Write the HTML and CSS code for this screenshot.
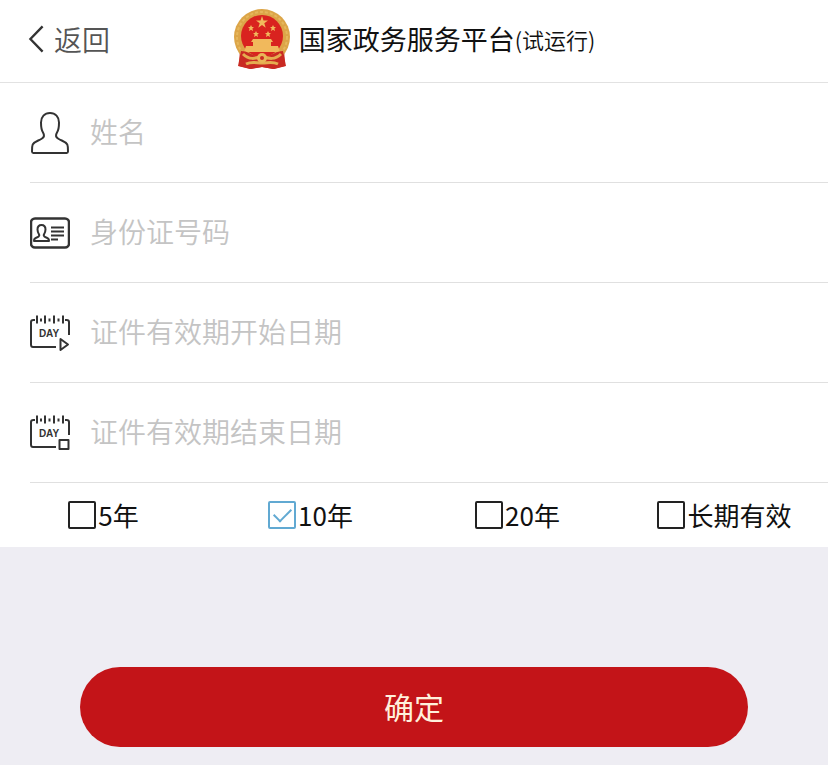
FILE: index.html
```
<!DOCTYPE html>
<html lang="zh-CN">
<head>
<meta charset="utf-8">
<meta name="viewport" content="width=device-width, initial-scale=1">
<title>国家政务服务平台</title>
<link rel="stylesheet" href="styles.css">
</head>
<body>
<header class="header">
  <a class="back" href="#">
    <svg class="back-icon" viewBox="0 0 18 32" aria-hidden="true"><path d="M15.500 2.500 2.500 16l13 13.500"/></svg>
    <span>返回</span>
  </a>
  <h1 class="brand">
    <svg class="emblem" viewBox="0 0 58 62" aria-hidden="true">
      <path fill="#c92a22" d="M7 40h44l1 18-12 3-11-2-11 2-12-3z"/>
      <circle cx="29" cy="29" r="28" fill="#dca548"/>
      <circle cx="29" cy="29" r="25" fill="none" stroke="#e6b75c" stroke-width="2" stroke-dasharray="3 2"/>
      <circle cx="29" cy="28" r="21" fill="#d9231f"/>
      <g fill="#f1b95c">
        <path d="m29 8 1.500 4.500H35l-3.700 2.800 1.400 4.400L29 17l-3.700 2.700 1.400-4.400L23 12.500h4.500z"/>
        <path d="m18 17 1 2h2l-1.600 1.500.6 2.500-2-1.300-2 1.300.6-2.500L15 19h2zM40 17l1 2h2l-1.600 1.500.6 2.500-2-1.300-2 1.300.6-2.500L37 19h2zM23 23l1 2h2l-1.600 1.500.6 2.500-2-1.300-2 1.300.6-2.500L20 25h2zM35 23l1 2h2l-1.600 1.500.6 2.500-2-1.300-2 1.300.6-2.500L32 25h2z"/>
        <path d="M20 31h18l2 3h-2v4h7l2 6H11l2-6h7v-4h-2z"/>
      </g>
      <path fill="#c92a22" d="M8 43c7 0 10 4 16 5l5-3 5 3c6-1 9-5 16-5l3 15-12 3-12-2-12 2-12-3z"/>
      <path fill="none" stroke="#e5ad50" stroke-width="3" d="M10 46c6 6 12 5 19 2 7 3 13 4 19-2M13 56c6-3 10-1 16-1s10-2 16 1"/>
      <circle cx="29" cy="50" r="5" fill="#e9b557"/>
      <circle cx="29" cy="50" r="2" fill="#c92a22"/>
    </svg>
    <span class="brand-name">国家政务服务平台</span><small class="brand-note">(试运行)</small>
  </h1>
</header>
<form class="form">
  <div class="fields">
    <div class="field">
      <svg class="field-icon" viewBox="0 0 40 44" aria-hidden="true"><path d="M20 2c-5.500 0-9 4-9 9.500 0 4.500.3 7.500 2 10 1.700 2.700 1.300 4.500-1 6-3.500 2.300-7.500 3-9.300 6C1.900 35.500 1.900 38 2 40.500q.1 1.500 1.300 1.500h33.400q1.200 0 1.300-1.500c.1-2.500.1-5-.7-7-1.800-3-5.800-3.700-9.300-6-2.300-1.500-2.700-3.300-1-6 1.700-2.500 2-5.500 2-10C29 6 25.500 2 20 2z"/></svg>
      <input class="field-input" type="text" aria-label="姓名" placeholder="姓名">
    </div>
    <div class="field">
      <svg class="field-icon" viewBox="0 0 40 44" aria-hidden="true">
        <rect x="1" y="7.500" width="38" height="29" rx="4" stroke-width="2.500"/>
        <path d="M11.500 14c-2.500 0-4 2-4 4.500s1 4 1.700 5.200c.5 1.300-1 2.300-3 3-1.700.6-2.200 2-2.200 3.300h15c0-1.300-.5-2.700-2.200-3.300-2-.7-3.500-1.700-3-3 .7-1.200 1.700-2.700 1.700-5.200S14 14 11.500 14zM21 16.500h13M21 20.500h13M21 24.500h13M21 28.500h7"/>
      </svg>
      <input class="field-input" type="text" aria-label="身份证号码" placeholder="身份证号码">
    </div>
    <div class="field">
      <svg class="field-icon" viewBox="0 0 40 44" aria-hidden="true">
        <path d="M5 9H3.500Q1 9 1 11v22.500q0 2.500 2 2.500h23M35 9h1.500q2.500 0 2.500 2v13M7 4.500v8M15 4.500v8M24 4.500v8M33 4.500v8M11 7.500v3M19.500 7.500v3M28.500 7.500v3M30.500 28v11l7.500-5.500z"/>
        <text class="day" x="19" y="26">DAY</text>
      </svg>
      <input class="field-input" type="text" aria-label="证件有效期开始日期" placeholder="证件有效期开始日期">
    </div>
    <div class="field">
      <svg class="field-icon" viewBox="0 0 40 44" aria-hidden="true">
        <path d="M5 9H3.500Q1 9 1 11v22.500q0 2.500 2 2.500h23M35 9h1.500q2.500 0 2.500 2v13M7 4.500v8M15 4.500v8M24 4.500v8M33 4.500v8M11 7.500v3M19.500 7.500v3M28.500 7.500v3M29.500 29h9v9h-9z"/>
        <text class="day" x="19" y="26">DAY</text>
      </svg>
      <input class="field-input" type="text" aria-label="证件有效期结束日期" placeholder="证件有效期结束日期">
    </div>
  </div>
  <div class="terms">
    <label class="term"><input class="term-box" type="checkbox">5年</label>
    <label class="term"><input class="term-box" type="checkbox" checked>10年</label>
    <label class="term"><input class="term-box" type="checkbox">20年</label>
    <label class="term"><input class="term-box" type="checkbox">长期有效</label>
  </div>
  <div class="actions">
    <button class="submit" type="button">确定</button>
  </div>
</form>
</body>
</html>
```
FILE: styles.css
```
* {
  box-sizing: border-box;
}

body {
  margin: 0;
  background: #eeedf3;
  color: #111;
  font-family: "Noto Sans CJK SC", sans-serif;
}

.header {
  display: grid;
  grid-template-columns: 1fr auto 1fr;
  align-items: center;
  height: 83px;
  padding: 0 28px;
  border-bottom: 1px solid #e2e2e2;
  background: #fff;
}

.back {
  display: flex;
  align-items: center;
  gap: 9px;
  padding-bottom: 4px;
  color: #555;
  font-size: 28px;
  font-weight: 350;
  line-height: 40px;
  text-decoration: none;
}

.back-icon {
  width: 17px;
  height: 30px;
  fill: none;
  stroke: #333;
  stroke-width: 2.5;
}

.brand {
  display: flex;
  align-items: center;
  margin: 0;
  padding-bottom: 4px;
  font-weight: 400;
  line-height: 40px;
}

.emblem {
  width: 58px;
  height: 62px;
  margin-right: 8px;
}

.brand-name {
  font-size: 27px;
}

.brand-note {
  font-size: 22px;
  font-weight: 350;
}

.fields {
  padding-left: 30px;
  background: #fff;
}

.field {
  display: flex;
  align-items: center;
  gap: 20px;
  height: 100px;
  border-bottom: 1px solid #e0e0e0;
}

.field-icon {
  flex: none;
  width: 40px;
  height: 44px;
  fill: none;
  stroke: #333;
  stroke-width: 2;
  stroke-linejoin: round;
}

.day {
  fill: #333;
  stroke: none;
  font: bold 10px "Liberation Sans", sans-serif;
  text-anchor: middle;
}

.field-input {
  flex: 1;
  min-width: 0;
  height: 60px;
  padding: 0 0 4px;
  border: 0;
  outline: 0;
  background: none;
  color: #333;
  font-family: inherit;
  font-size: 28px;
  font-weight: 350;
}

.field-input::placeholder {
  color: #c4c4c4;
  opacity: 1;
}

.terms {
  display: grid;
  grid-template-columns: repeat(4, 1fr);
  height: 64px;
  background: #fff;
}

.term {
  display: flex;
  align-items: center;
  justify-content: center;
  gap: 2px;
  font-size: 26px;
  line-height: 40px;
  white-space: nowrap;
}

.term-box {
  display: grid;
  place-items: center;
  width: 28px;
  height: 28px;
  margin: 0;
  border: 2px solid #222;
  border-radius: 2px;
  appearance: none;
}

.term-box:checked {
  border-color: #61a9d2;
}

.term-box:checked::before {
  content: "";
  width: 15px;
  height: 8px;
  margin-bottom: 4px;
  border: solid #61a9d2;
  border-width: 0 0 2px 2px;
  transform: rotate(-45deg);
}

.actions {
  padding: 120px 80px 18px;
}

.submit {
  display: block;
  width: 100%;
  height: 80px;
  padding: 0 0 2px;
  border: 0;
  border-radius: 40px;
  background: #c31418;
  color: #fff0dc;
  font-family: inherit;
  font-size: 30px;
  font-weight: 400;
}
```
